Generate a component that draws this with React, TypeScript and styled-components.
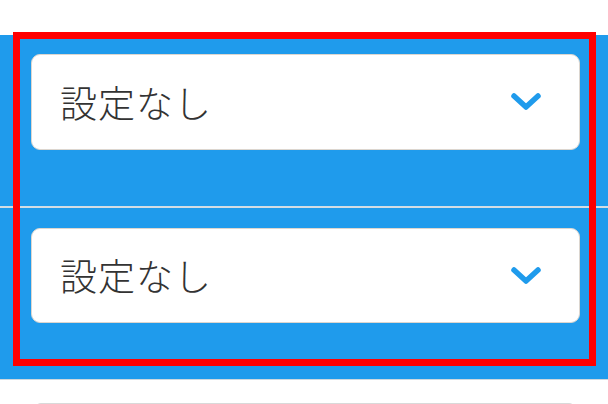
import React from "react";
import styled, { createGlobalStyle } from "styled-components";

const Global = createGlobalStyle`
  html, body { margin: 0; padding: 0; background: #ffffff; }
  body { font-family: "Noto Sans CJK JP", "Noto Sans", sans-serif; }
`;

const Page = styled.div`
  position: relative;
  width: 608px;
  height: 404px;
  overflow: hidden;
  background: #ffffff;
`;

const TopSpace = styled.div`
  height: 35px;
  background: #ffffff;
`;

const Panel = styled.div`
  background: #1f9bec;
  border-bottom: 1px solid #cfd8de;
`;

const Section = styled.div<{ $top: number; $divider?: boolean }>`
  padding: ${(p) => p.$top}px 28px 56px 31px;
  border-top: ${(p) => (p.$divider ? "2px solid #d3dde4" : "none")};
`;

const SelectBox = styled.div<{ $h: number }>`
  box-sizing: border-box;
  height: ${(p) => p.$h}px;
  background: #ffffff;
  border: 1px solid #dcd6cf;
  border-radius: 9px;
  display: flex;
  align-items: center;
  justify-content: space-between;
  padding: 0 37px 0 28px;
`;

const Label = styled.span`
  font-family: "Noto Sans CJK JP", "Noto Sans", sans-serif;
  font-size: 37px;
  font-weight: 300;
  color: #333333;
  letter-spacing: 1px;
  line-height: 1;
`;

const Chevron = styled.svg`
  width: 32px;
  height: 22px;
  display: block;
`;

const Below = styled.div`
  padding: 23px 33px 0 35px;
`;

const NextField = styled.div`
  height: 40px;
  border-top: 2px solid #d9d9d9;
  border-radius: 6px 6px 0 0;
`;

const Highlight = styled.div`
  position: absolute;
  left: 13px;
  top: 32px;
  width: 583px;
  height: 334px;
  box-sizing: border-box;
  border: 7px solid #ff0000;
  pointer-events: none;
`;

const ChevronIcon = () => (
  <Chevron viewBox="0 0 32 22">
    <path
      d="M4 5 L16 16 L28 5"
      fill="none"
      stroke="#1f9bec"
      strokeWidth="5.5"
      strokeLinecap="round"
      strokeLinejoin="round"
    />
  </Chevron>
);

export default function App() {
  return (
    <>
      <Global />
      <Page>
        <TopSpace />
        <Panel>
          <Section $top={19}>
            <SelectBox $h={96}>
              <Label>設定なし</Label>
              <ChevronIcon />
            </SelectBox>
          </Section>
          <Section $top={20} $divider>
            <SelectBox $h={95}>
              <Label>設定なし</Label>
              <ChevronIcon />
            </SelectBox>
          </Section>
        </Panel>
        <Below>
          <NextField />
        </Below>
        <Highlight />
      </Page>
    </>
  );
}
